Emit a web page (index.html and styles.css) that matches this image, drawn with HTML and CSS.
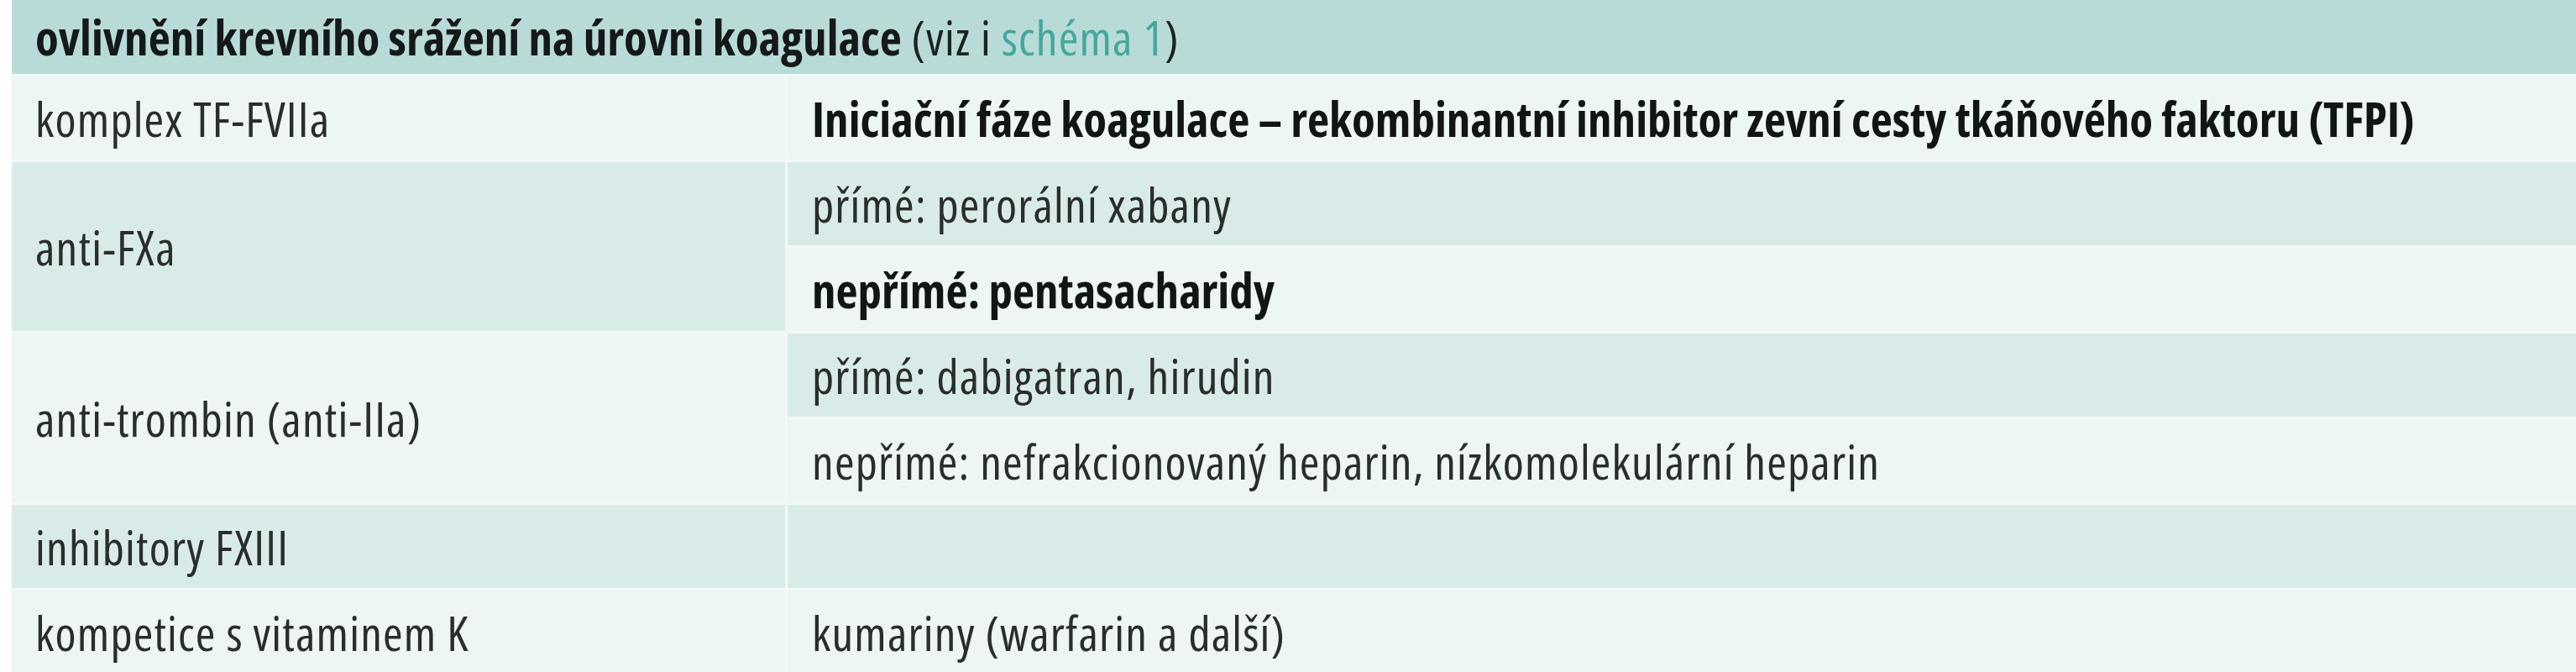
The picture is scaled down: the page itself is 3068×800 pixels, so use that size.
FILE: index.html
```html
<!DOCTYPE html>
<html lang="cs">
<head>
<meta charset="utf-8">
<title>Ovlivnění krevního srážení</title>
<link rel="stylesheet" href="styles.css">
</head>
<body>
<div class="wrap">
  <div class="tbl">
    <div class="cell head"><span><b>ovlivnění krevního srážení na úrovni koagulace</b> (viz i <span class="ref">schéma 1</span>)</span></div>

    <div class="cell left light r2"><span>komplex TF-FVIIa</span></div>
    <div class="cell right light r2 strong"><span>Iniciační fáze koagulace – rekombinantní inhibitor zevní cesty tkáňového faktoru (TFPI)</span></div>

    <div class="cell left dark r3-4"><span>anti-FXa</span></div>
    <div class="cell right dark r3"><span>přímé: perorální xabany</span></div>
    <div class="cell right light r4 strong"><span>nepřímé: pentasacharidy</span></div>

    <div class="cell left light r5-6"><span>anti-trombin (anti-IIa)</span></div>
    <div class="cell right dark r5"><span>přímé: dabigatran, hirudin</span></div>
    <div class="cell right light r6"><span>nepřímé: nefrakcionovaný heparin, nízkomolekulární heparin</span></div>

    <div class="cell left dark r7"><span>inhibitory FXIII</span></div>
    <div class="cell right dark r7"></div>

    <div class="cell left light r8"><span>kompetice s vitaminem K</span></div>
    <div class="cell right light r8"><span>kumariny (warfarin a další)</span></div>
  </div>
</div>
</body>
</html>
```
FILE: styles.css
```css
html, body {
  margin: 0;
  padding: 0;
  background: #ffffff;
}

.wrap {
  padding-left: 14px;
  overflow: hidden;
}

.tbl {
  display: grid;
  grid-template-columns: 921px 1fr;
  grid-template-rows: 88px repeat(7, 99px);
  column-gap: 3px;
  row-gap: 3px;
  background: #f2f9f8;
  font-family: "Open Sans", "Roboto Condensed", sans-serif;
  font-stretch: 75%;
  font-size: 57px;
  letter-spacing: 1.2px;
  color: #2a2d2d;
}

.cell {
  display: flex;
  align-items: center;
  padding: 0 28px;
  white-space: nowrap;
}

.head {
  grid-column: 1 / 3;
  grid-row: 1;
  background: #b9dbd8;
  color: #1d2222;
}

.head b {
  font-weight: 700;
  letter-spacing: 0;
  color: #151919;
}

.ref {
  color: #45a79d;
}

.left { grid-column: 1; }
.right { grid-column: 2; padding-left: 29px; }

.light { background: #edf6f5; }
.dark { background: #d9ebe9; }

.strong {
  font-weight: 700;
  letter-spacing: 0;
  color: #121515;
}

.r2 { grid-row: 2; }
.r3 { grid-row: 3; }
.r4 { grid-row: 4; }
.r5 { grid-row: 5; }
.r6 { grid-row: 6; }
.r7 { grid-row: 7; }
.r8 { grid-row: 8; }
.r3-4 { grid-row: 3 / 5; }
.r5-6 { grid-row: 5 / 7; }
```
